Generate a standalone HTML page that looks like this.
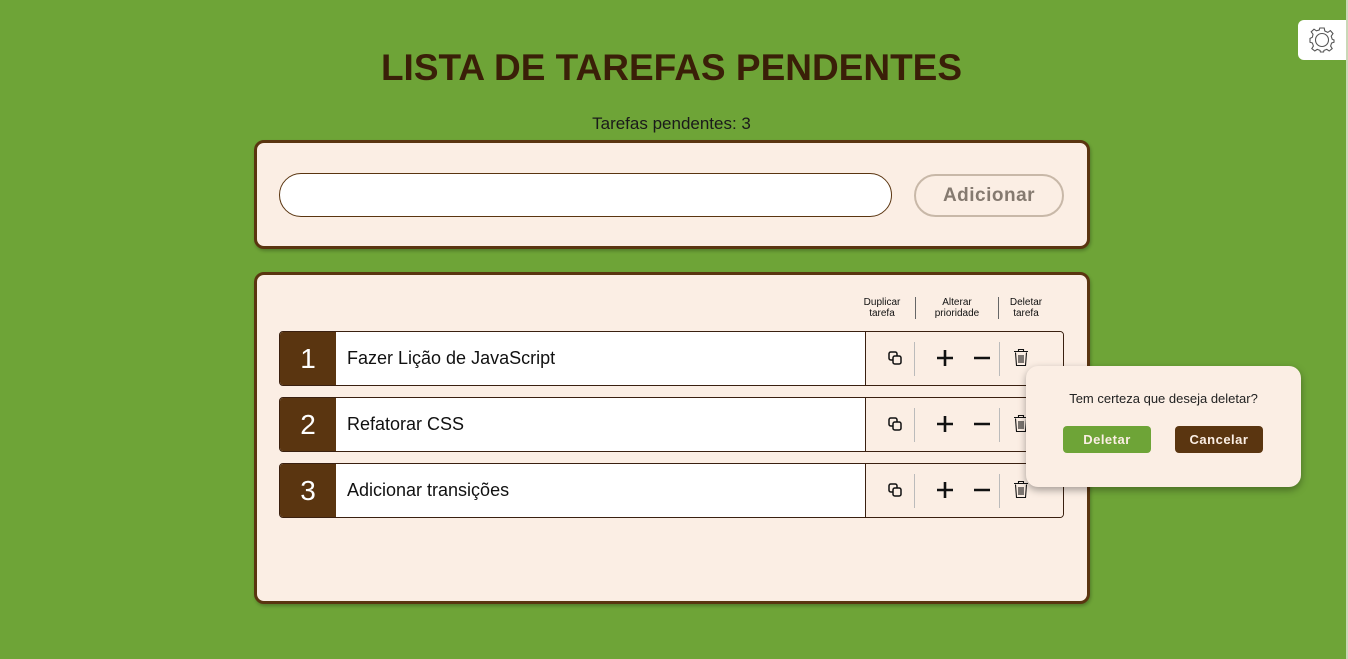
<!DOCTYPE html>
<html><head><meta charset="utf-8"><style>
*{box-sizing:border-box;margin:0;padding:0}
body{width:1348px;height:659px;background:#6ea437;font-family:"Liberation Sans",sans-serif;position:relative;overflow:hidden;color:#111}
.strip{position:absolute;right:0;top:0;width:2px;height:659px;background:#c9d8b8}
h1{position:absolute;left:0;width:1343px;top:47px;text-align:center;font-size:37px;font-weight:bold;color:#3a1f08;letter-spacing:0}
.cnt{position:absolute;left:0;width:1343px;top:114px;text-align:center;font-size:17px;color:#1a1a1a}
.card{position:absolute;left:254px;width:836px;background:#fbeee4;border:3px solid #5a3510;border-radius:10px;box-shadow:1px 2px 3px rgba(0,0,0,.25)}
.inp{position:absolute;left:279px;top:173px;width:613px;height:44px;border:1px solid #5a3510;border-radius:22px;background:#fff}
.add{position:absolute;left:914px;top:174px;width:150px;height:43px;border:2px solid #c8b8a8;border-radius:22px;text-align:center;line-height:39px;font-size:19px;font-weight:bold;color:#857a70;letter-spacing:.5px}
.hd{position:absolute;top:297px;font-size:10px;line-height:11px;text-align:center;color:#111}
.vl{position:absolute;width:1px;background:#666}
.row{position:absolute;left:279px;width:785px;height:55px;border:1px solid #3a2010;border-radius:4px;background:#fff;overflow:hidden}
.num{position:absolute;left:0;top:0;width:56px;height:100%;background:#5a3510;color:#fff;font-size:28px;text-align:center;line-height:53px}
.txt{position:absolute;left:67px;top:0;line-height:53px;font-size:18px;color:#111}
.act{position:absolute;left:585px;top:0;width:200px;height:100%;background:#fbeee4;border-left:1px solid #3a2010}
.pop{position:absolute;left:1026px;top:366px;width:275px;height:121px;background:#fbeee4;border-radius:12px;box-shadow:0 3px 8px rgba(0,0,0,.35)}
.btn{position:absolute;top:60px;width:88px;height:27px;border-radius:4px;color:#fbeee4;font-size:13px;font-weight:bold;text-align:center;line-height:27px;letter-spacing:.5px}
.gear{position:absolute;left:1298px;top:20px;width:48px;height:40px;background:#fff;border-radius:6px 0 0 6px}
</style></head><body>
<div class="strip"></div>
<div class="gear"><svg width="48" height="40" viewBox="0 0 48 40"><g transform="translate(24,20)" fill="none" stroke="#555" stroke-width="1.1"><path d="M-2.2,-12 L2.2,-12 L2.8,-9 L5.8,-7.6 L8.4,-9.4 L11,-6.4 L9.2,-3.8 L10.2,-0.8 L12,0 L12,2.2 L9.6,3 L8.6,6 L10.2,8.6 L7.2,11 L4.8,9.4 L2,10.4 L1.6,12 L-1.6,12 L-2,10.4 L-4.8,9.4 L-7.2,11 L-10.2,8.6 L-8.6,6 L-9.6,3 L-12,2.2 L-12,-1.5 L-9.6,-2.8 L-9,-5.8 L-10.8,-8.2 L-8,-10.8 L-5.6,-9.2 L-2.8,-10 Z"/><circle r="6.5"/></g></svg></div>
<h1>LISTA DE TAREFAS PENDENTES</h1>
<div class="cnt">Tarefas pendentes: 3</div>
<div class="card" style="top:140px;height:109px"></div>
<div class="inp"></div>
<div class="add">Adicionar</div>
<div class="card" style="top:272px;height:332px"></div>
<div class="hd" style="left:852px;width:60px">Duplicar<br>tarefa</div>
<div class="vl" style="left:915px;top:297px;height:22px"></div>
<div class="hd" style="left:925px;width:64px">Alterar<br>prioridade</div>
<div class="vl" style="left:998px;top:297px;height:22px"></div>
<div class="hd" style="left:1000px;width:52px">Deletar<br>tarefa</div>

<div class="row" style="top:331px"><div class="num">1</div><div class="txt">Fazer Lição de JavaScript</div><div class="act"></div></div>
<div class="row" style="top:397px"><div class="num">2</div><div class="txt">Refatorar CSS</div><div class="act"></div></div>
<div class="row" style="top:463px"><div class="num">3</div><div class="txt">Adicionar transições</div><div class="act"></div></div>

<svg style="position:absolute;left:0;top:0" width="1348" height="659">
<g fill="none" stroke="#111" stroke-width="1.5">
<g id="ic"><rect x="889" y="352" width="8" height="8" rx="1.8"/><rect x="893" y="356" width="8" height="8" rx="1.8" fill="#fbeee4"/>
<line x1="914.5" y1="342" x2="914.5" y2="376" stroke="#bbb" stroke-width="1"/>
<line x1="999.5" y1="342" x2="999.5" y2="376" stroke="#bbb" stroke-width="1"/>
<path d="M937 358h16M945 350v16M974 358h16" stroke-width="2.6"/>
<path d="M1014 351.5h14M1018.5 351.5v-2h5v2M1015.5 352.5l1 13h9l1-13M1019 355v8M1021 355v8M1023 355v8" stroke-width="1.1"/></g>
<use href="#ic" y="66"/><use href="#ic" y="132"/>
</g></svg>

<div class="pop">
<div style="position:absolute;top:25px;width:100%;text-align:center;font-size:13px;color:#222">Tem certeza que deseja deletar?</div>
<div class="btn" style="left:37px;background:#6ea437">Deletar</div>
<div class="btn" style="left:149px;background:#5a3510">Cancelar</div>
</div>
</body></html>
